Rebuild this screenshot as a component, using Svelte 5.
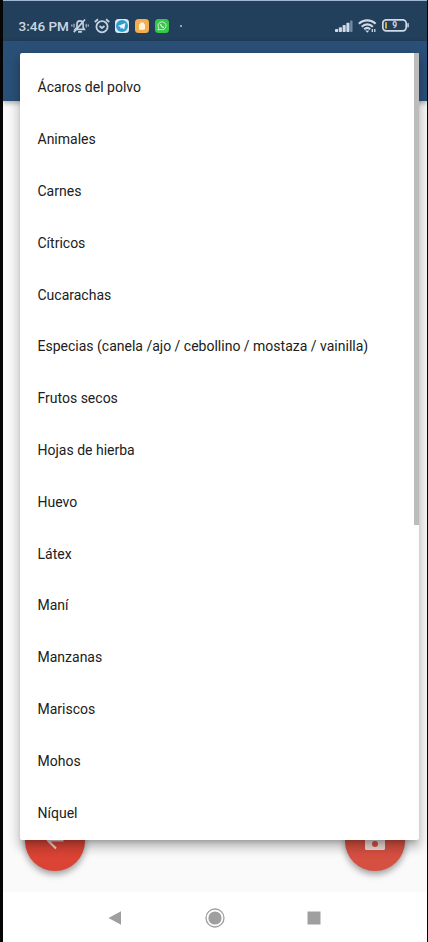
<script>
  const items = [
    'Ácaros del polvo', 'Animales', 'Carnes', 'Cítricos', 'Cucarachas',
    'Especias (canela /ajo / cebollino / mostaza / vainilla)',
    'Frutos secos', 'Hojas de hierba', 'Huevo', 'Látex', 'Maní',
    'Manzanas', 'Mariscos', 'Mohos', 'Níquel'
  ];
</script>

<div class="phone">
  <header class="status">
    <span class="time">3:46 PM</span>
    <svg class="bell" width="18" height="16" viewBox="0 0 19 16" fill="none" stroke="#c6d2df" stroke-width="1.8">
      <path d="M4.500 11.500H14L12.800 9.500V6.300C12.800 3.800 11.700 2.500 9.500 2.500S6.300 4 6.300 6.300v3.200z" />
      <path d="M7.500 14.300h4M3 14.500 14.800 1.200" />
      <path d="M3.200 5.500v4M.9 6.500v2M16 5.500v4M18.200 6.500v2" stroke-width="1.100" />
    </svg>
    <svg class="alarm" width="16" height="16" viewBox="0 0 16 16" fill="none" stroke="#c6d2df" stroke-width="1.800">
      <circle cx="8" cy="8.700" r="5.600" />
      <path d="M.8 4 4 1.200M15.200 4 12 1.200M5.500 8l2.500 2 2.500-2" />
    </svg>
    <svg class="app" width="14" height="14" viewBox="0 0 14 14">
      <rect width="14" height="14" rx="3.500" fill="#dceaf2" />
      <circle cx="7" cy="7" r="6" fill="#329bcf" />
      <path d="m2.800 7 7.700-3-1.300 6.600-2.300-1.800-1.200 1.200-.4-2.200z" fill="#eef7fc" />
    </svg>
    <svg class="app" width="14" height="14" viewBox="0 0 14 14">
      <rect width="14" height="14" rx="3.500" fill="#f5ad50" />
      <path d="M4 5.200h1.200V3.500h3.600v1.700H10v4.300q0 1.300-1.300 1.300H5.300Q4 10.800 4 9.500z" fill="#fff4dc" />
    </svg>
    <svg class="app" width="14" height="14" viewBox="0 0 14 14">
      <rect width="14" height="14" rx="3.500" fill="#36c64c" />
      <path d="m3 11 .6-2.100A4 4 0 1 1 5.200 10.400z" fill="none" stroke="#c9f3cf" stroke-width="1" />
      <path d="M5.600 5c.2 2 1.500 3.300 3.400 3.500" fill="none" stroke="#c9f3cf" stroke-width="1.300" />
    </svg>
    <i class="dot"></i>
    <svg class="signal" width="18" height="12" viewBox="0 0 19 12" preserveAspectRatio="none" fill="#d0dae4">
      <rect x="0" y="9" width="3.300" height="3" rx=".8" /><rect x="4" y="7.300" width="3.300" height="4.700" rx=".8" />
      <rect x="8" y="5" width="3.300" height="7" rx=".8" /><rect x="12" y="2.800" width="3.300" height="9.200" rx=".8" />
      <rect x="16" y=".5" width="2.500" height="11.500" rx=".8" fill="#718ba5" />
    </svg>
    <svg class="wifi" width="19" height="14" viewBox="0 0 19 14" fill="none" stroke="#d0dae4" stroke-width="2.100">
      <path d="M.9 4.800C5.500.2 13 .2 17.600 4.800M3.700 7.700c3.200-3.100 8-3.100 11.200 0M6.200 10.300c1.900-1.800 4.200-1.800 6 0" />
      <path d="m7.200 11.500 2.100 2.200 2-2.200z" fill="#d0dae4" stroke="none" />
      <path d="M14.300 10v3M16.800 10v3" stroke-width="1.300" />
    </svg>
    <svg class="battery" width="27" height="13" viewBox="0 0 27 13">
      <rect x=".8" y=".8" width="23.400" height="11" rx="3.500" fill="none" stroke="#d0dae4" stroke-width="1.700" />
      <rect x="25.300" y="4" width="1.500" height="4.500" rx=".7" fill="#d0dae4" />
      <rect x="3" y="3" width="2" height="6.700" rx=".7" fill="#d6a93c" />
      <text x="12.700" y="9.300" text-anchor="middle">9</text>
    </svg>
  </header>
  <div class="appbar"></div>
  <main></main>
  <nav>
    <svg width="14" height="14" viewBox="0 0 14 14"><path d="M.5 7 13 .3v13.400z" fill="#9f9f9f" /></svg>
    <svg width="20" height="20" viewBox="0 0 20 20">
      <circle cx="10" cy="10" r="9" fill="#fff" stroke="#9f9f9f" stroke-width="1.300" />
      <circle cx="10" cy="10" r="6.600" fill="#9f9f9f" />
    </svg>
    <svg width="14" height="14" viewBox="0 0 14 14"><rect x=".5" y=".5" width="13" height="13" fill="#9f9f9f" /></svg>
  </nav>

  <button class="fab back" aria-label="Atrás">
    <svg width="24" height="24" viewBox="0 0 24 24" fill="none" stroke="#e9d4d0" stroke-width="2.200"><path d="M20.500 11.500H5M13 19.500l-8-8 8-8" /></svg>
  </button>
  <button class="fab save" aria-label="Guardar">
    <svg width="24" height="24" viewBox="0 0 24 24"><path fill="#eadbd8" fill-rule="evenodd" d="M17 3H4a2 2 0 0 0-2 2v14.500q0 1.500 1.500 1.500h17q1.500 0 1.500-1.500V8zM12 12a3 3 0 1 1 0 6 3 3 0 0 1 0-6zM5 5h10v4H5z" /></svg>
  </button>

  <div class="menu">
    <ul>
      {#each items as item}
        <li>{item}</li>
      {/each}
    </ul>
    <i class="thumb"></i>
  </div>
</div>

<style>
  :global(body) { margin: 0; background: #000; }
  .phone {
    position: relative; box-sizing: border-box; width: 428px; height: 942px;
    display: flex; flex-direction: column; overflow: hidden;
    padding-left: 3px; padding-right: 1px; background: #050505;
    font-family: Roboto, sans-serif;
  }
  .status {
    box-sizing: border-box; height: 41px; flex: none; display: flex; align-items: center;
    padding: 10px 18px 1px 15.500px; background: #223f5b; border-top: 1px solid #9fb7d0;
    color: #ccd7e2;
  }
  .status svg { flex: none; display: block; }
  .time { font-size: 13.500px; font-weight: 500; line-height: 18px; width: 52.500px; white-space: nowrap; }
  .alarm { margin-left: 5px; }
  .app { margin-left: 6px; }
  .alarm + .app { margin-left: 5px; }
  .dot { width: 2px; height: 2px; border-radius: 50%; background: #b9c7d5; margin-left: 11px; }
  .signal { margin-left: auto; }
  .wifi { margin-left: 5px; }
  .battery { margin-left: 5px; }
  .battery text { font: 700 8.500px Roboto, sans-serif; fill: #d0dae4; }
  .appbar { height: 60px; flex: none; background: #2b5078; box-shadow: 0 2px 5px rgba(0, 0, 0, .3); z-index: 1; }
  main { flex: 1; background: #fafafa; }
  nav {
    box-sizing: border-box; height: 50px; flex: none; display: flex; align-items: center;
    justify-content: space-between; padding: 1px 106px 0 105px; background: #fff;
  }
  .fab {
    position: absolute; top: 810.500px; width: 60px; height: 60px; padding: 0; border: 0;
    border-radius: 50%; display: flex; align-items: center; justify-content: center;
    background: #db4435; box-shadow: 0 3px 7px rgba(0, 0, 0, .4);
  }
  .back { left: 25px; }
  .save { left: 345px; background: #d65042; }
  .menu {
    position: absolute; z-index: 2; left: 20px; top: 53px; width: 398.500px; height: 787px;
    box-sizing: border-box; border-radius: 2px; background: #fff;
    box-shadow: 0 5px 5px -3px rgba(0, 0, 0, .2), 0 8px 10px 1px rgba(0, 0, 0, .14), 0 3px 14px 2px rgba(0, 0, 0, .12);
  }
  ul { list-style: none; margin: 0; padding: 8.300px 17.500px 0; }
  li {
    height: 51.830px; display: flex; align-items: center; white-space: nowrap;
    font-size: 14px; color: #202020;
  }
  .thumb { position: absolute; right: 0; top: 0; width: 4.500px; height: 472px; background: #bcbcbc; }
</style>
